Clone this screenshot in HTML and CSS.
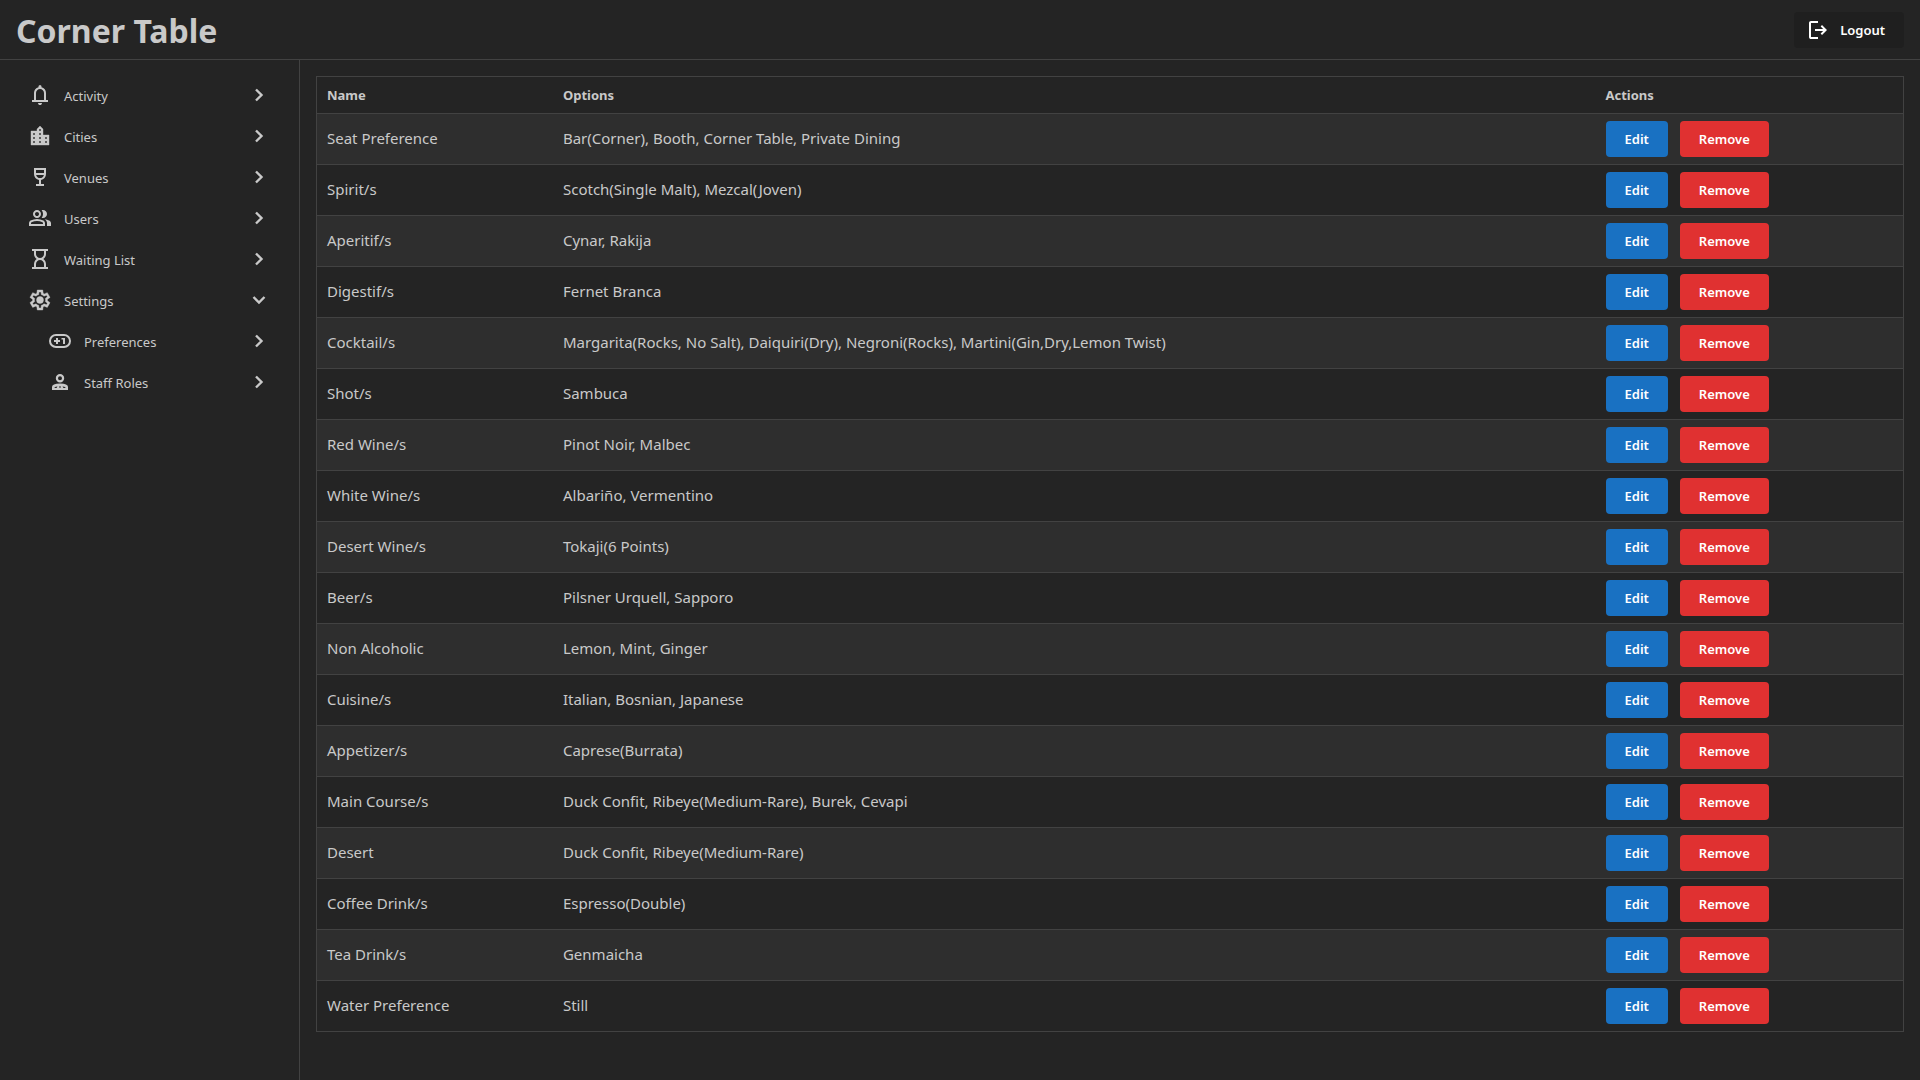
FILE: index.html
```html
<!DOCTYPE html>
<html lang="en">
<head>
<meta charset="utf-8">
<title>Corner Table</title>
<link rel="stylesheet" href="styles.css">
</head>
<body>
<svg class="sprite" aria-hidden="true">
  <symbol id="chevron" viewBox="0 0 16 16"><path d="M5 2.500l5.500 5.500l-5.500 5.500" fill="none" stroke="currentColor" stroke-width="2.400"/></symbol>
</svg>
<header class="header">
  <h1 class="brand">Corner Table</h1>
  <button class="button logout" type="button">
    <svg class="icon" viewBox="0 0 24 24"><path d="M5 21q-.825 0-1.412-.587T3 19V5q0-.825.588-1.412T5 3h7v2H5v14h7v2zm11-4l-1.375-1.45l2.55-2.55H9v-2h8.175l-2.55-2.55L16 7l5 5z"/></svg>
    Logout
  </button>
</header>
<div class="shell">
  <nav class="sidebar">
    <a class="nav-link" href="#"><svg class="icon" viewBox="0 0 24 24"><path d="M4 19v-2h2v-7q0-2.075 1.25-3.687T10.5 4.2v-.7q0-.625.438-1.062T12 2t1.063.438T13.5 3.5v.7q2 .5 3.25 2.113T18 10v7h2v2zm8 3q-.825 0-1.412-.587T10 20h4q0 .825-.587 1.413T12 22m-4-5h8v-7q0-1.65-1.175-2.825T12 6T9.175 7.175T8 10z"/></svg><span class="nav-label">Activity</span><svg class="chevron"><use href="#chevron"/></svg></a>
    <a class="nav-link" href="#"><svg class="icon heavy" viewBox="0 0 24 24"><path d="M3 21V7h6V5l3-3l3 3v6h6v10zm2-2h2v-2H5zm0-4h2v-2H5zm0-4h2V9H5zm6 8h2v-2h-2zm0-4h2v-2h-2zm0-4h2V9h-2zm0-4h2V5h-2zm6 12h2v-2h-2zm0-4h2v-2h-2z"/></svg><span class="nav-label">Cities</span><svg class="chevron"><use href="#chevron"/></svg></a>
    <a class="nav-link" href="#"><svg class="icon" viewBox="0 0 24 24"><path d="M8 21v-2h3v-4.1q-2.15-.35-3.575-2.025T6 9V3h12v6q0 2.2-1.425 3.875T13 14.9V19h3v2zm4-8q1.475 0 2.563-.85T15.9 10H8.1q.35 1.3 1.425 2.15T12 13M8 8h8V5H8z"/></svg><span class="nav-label">Venues</span><svg class="chevron"><use href="#chevron"/></svg></a>
    <a class="nav-link" href="#"><svg class="icon" viewBox="0 0 24 24"><path d="M1 20v-2.8q0-.85.438-1.562T2.6 14.55q1.55-.775 3.15-1.162T9 13t3.25.388t3.15 1.162q.725.375 1.163 1.088T17 17.2V20zm18 0v-3q0-1.1-.612-2.113T16.65 13.15q1.275.15 2.4.513t2.1.887q.9.5 1.375 1.112T23 17v3zM9 12q-1.65 0-2.825-1.175T5 8t1.175-2.825T9 4t2.825 1.175T13 8t-1.175 2.825T9 12m10-4q0 1.65-1.175 2.825T15 12q-.275 0-.7-.062t-.7-.138q.675-.8 1.038-1.775T15 8t-.362-2.025T13.6 4.2q.35-.125.7-.163T15 4q1.65 0 2.825 1.175T19 8M3 18h12v-.8q0-.275-.137-.5t-.363-.35q-1.35-.675-2.725-1.012T9 15t-2.775.338T3.5 16.35q-.225.125-.363.35T3 17.2zm6-8q.825 0 1.413-.587T11 8t-.587-1.412T9 6t-1.412.588T7 8t.588 1.413T9 10"/></svg><span class="nav-label">Users</span><svg class="chevron"><use href="#chevron"/></svg></a>
    <a class="nav-link" href="#"><svg class="icon" viewBox="0 0 24 24"><path d="M8 20h8v-3q0-1.65-1.175-2.825T12 13t-2.825 1.175T8 17zm4-9q1.65 0 2.825-1.175T16 7V4H8v3q0 1.65 1.175 2.825T12 11M4 22v-2h2v-3q0-1.525.713-2.863T8.7 12q-1.275-.8-1.987-2.137T6 7V4H4V2h16v2h-2v3q0 1.525-.712 2.863T15.3 12q1.275.8 1.988 2.138T18 17v3h2v2z"/></svg><span class="nav-label">Waiting List</span><svg class="chevron"><use href="#chevron"/></svg></a>
    <a class="nav-link open" href="#"><svg class="icon heavy" viewBox="0 0 24 24"><path fill-rule="evenodd" d="m9.25 22l-.4-3.2q-.325-.125-.612-.3t-.563-.375L4.7 19.375l-2.75-4.75l2.575-1.95Q4.5 12.5 4.5 12.338v-.675q0-.163.025-.338L1.95 9.375l2.75-4.75l2.975 1.25q.275-.2.575-.375t.6-.3l.4-3.2h5.5l.4 3.2q.325.125.613.3t.562.375l2.975-1.25l2.75 4.75l-2.575 1.95q.025.175.025.338v.674q0 .163-.05.338l2.575 1.95l-2.75 4.75l-2.95-1.25q-.275.2-.575.375t-.6.3l-.4 3.2zM11 20h1.975l.35-2.65q.775-.2 1.438-.587t1.212-.938l2.475 1.025l.975-1.7l-2.15-1.625q.125-.35.175-.737T17.5 12t-.05-.787t-.175-.738l2.15-1.625l-.975-1.7l-2.475 1.05q-.55-.575-1.212-.962t-1.438-.588L13 4h-1.975l-.35 2.65q-.775.2-1.437.588t-1.213.937L5.55 7.15l-.975 1.7l2.15 1.6q-.125.375-.175.75t-.05.8q0 .4.05.775t.175.75l-2.15 1.625l.975 1.7l2.475-1.05q.55.575 1.213.963t1.437.587z"/><circle cx="12" cy="12" r="3.5"/></svg><span class="nav-label">Settings</span><svg class="chevron"><use href="#chevron"/></svg></a>
    <a class="nav-link child" href="#"><svg class="icon" viewBox="0 0 24 24"><rect x="2" y="6" width="20" height="12" rx="6" fill="none" stroke="currentColor" stroke-width="2"/><path d="M8 15v-2H6v-2h2V9h2v2h2v2h-2v2zm7 0v-4.500h-1.500V9H17v6z"/></svg><span class="nav-label">Preferences</span><svg class="chevron"><use href="#chevron"/></svg></a>
    <a class="nav-link child" href="#"><svg class="icon" viewBox="0 0 24 24"><path fill-rule="evenodd" d="M12 4a4.200 4.200 0 1 1 0 8.400a4.200 4.200 0 0 1 0-8.400zm0 2.200a2 2 0 1 0 0 4a2 2 0 0 0 0-4zM4 20v-3q0-3.500 8-3.500t8 3.500v3zm2.500-2h2l1-1.500q-2 .1-3 1zm4.500-1.500v1h2v-1zm3.500 0l1 1.500h2v-.5q-1-.9-3-1z"/></svg><span class="nav-label">Staff Roles</span><svg class="chevron"><use href="#chevron"/></svg></a>
  </nav>
  <main class="content">
    <table class="prefs">
      <colgroup><col class="col-name"><col><col class="col-actions"></colgroup>
      <thead><tr><th scope="col">Name</th><th scope="col">Options</th><th scope="col">Actions</th></tr></thead>
      <tbody id="rows"></tbody>
    </table>
  </main>
</div>
<script src="app.js"></script>
</body>
</html>
```
FILE: styles.css
```css
* { box-sizing: border-box; }
body {
  margin: 0;
  min-height: 100vh;
  display: flex;
  flex-direction: column;
  background: #242424;
  color: #c9c9c9;
  font-family: "Segoe UI", "Noto Sans", sans-serif;
  font-size: 15px;
}
.sprite { display: none; }
.header {
  height: 60px;
  flex: none;
  display: flex;
  align-items: center;
  justify-content: space-between;
  padding: 0 16px;
  border-bottom: 1px solid #424242;
}
.brand { margin: 0; padding-top: 2px; font-size: 32px; line-height: 44px; font-weight: 700; }
.button {
  height: 36px;
  padding: 0 19px;
  border: 0;
  border-radius: 4px;
  color: #fff;
  font-family: inherit;
  font-size: 13px;
  font-weight: 600;
  cursor: pointer;
}
.logout {
  display: flex;
  align-items: center;
  gap: 10px;
  padding-left: 12px;
  background: #1f1f1f;
}
.icon { width: 24px; height: 24px; flex: none; fill: currentColor; }
.heavy { stroke: currentColor; stroke-width: 0.4; }
.shell { flex: 1; display: flex; }
.sidebar {
  width: 300px;
  flex: none;
  padding: 14px 16px;
  border-right: 1px solid #424242;
}
.nav-link {
  display: flex;
  align-items: center;
  gap: 12px;
  height: 41px;
  padding: 0 12px;
  color: inherit;
  font-size: 13px;
  text-decoration: none;
}
.child { padding-left: 32px; }
.nav-label { flex: 1; padding-top: 2px; }
.chevron { width: 16px; height: 16px; margin-right: 4px; }
.open .chevron { transform: rotate(90deg); }
.content { flex: 1; min-width: 0; padding: 16px; }
.prefs {
  width: 100%;
  table-layout: fixed;
  border-collapse: collapse;
  border: 1px solid #424242;
}
.col-name { width: 14.9%; }
.col-actions { width: 308px; }
.prefs th, .prefs td { padding: 0 10px; text-align: left; }
.prefs th { height: 37px; font-size: 13px; font-weight: 700; }
.prefs td { height: 51px; }
.prefs td:not(:last-child) { padding-bottom: 2px; }
.prefs tr { border-bottom: 1px solid #424242; }
.prefs tbody tr:nth-child(odd) { background: #2e2e2e; }
.actions { display: flex; gap: 12px; }
.edit { background: #1971c2; }
.remove { background: #e03131; }
```
FILE: app.js
```js
const preferences = [
  ["Seat Preference", "Bar(Corner), Booth, Corner Table, Private Dining"],
  ["Spirit/s", "Scotch(Single Malt), Mezcal(Joven)"],
  ["Aperitif/s", "Cynar, Rakija"],
  ["Digestif/s", "Fernet Branca"],
  ["Cocktail/s", "Margarita(Rocks, No Salt), Daiquiri(Dry), Negroni(Rocks), Martini(Gin,Dry,Lemon Twist)"],
  ["Shot/s", "Sambuca"],
  ["Red Wine/s", "Pinot Noir, Malbec"],
  ["White Wine/s", "Albariño, Vermentino"],
  ["Desert Wine/s", "Tokaji(6 Points)"],
  ["Beer/s", "Pilsner Urquell, Sapporo"],
  ["Non Alcoholic", "Lemon, Mint, Ginger"],
  ["Cuisine/s", "Italian, Bosnian, Japanese"],
  ["Appetizer/s", "Caprese(Burrata)"],
  ["Main Course/s", "Duck Confit, Ribeye(Medium-Rare), Burek, Cevapi"],
  ["Desert", "Duck Confit, Ribeye(Medium-Rare)"],
  ["Coffee Drink/s", "Espresso(Double)"],
  ["Tea Drink/s", "Genmaicha"],
  ["Water Preference", "Still"]
];
document.getElementById("rows").innerHTML = preferences.map(([name, options]) => `
  <tr>
    <td>${name}</td>
    <td>${options}</td>
    <td><div class="actions">
      <button class="button edit" type="button">Edit</button>
      <button class="button remove" type="button">Remove</button>
    </div></td>
  </tr>`).join("");
```
